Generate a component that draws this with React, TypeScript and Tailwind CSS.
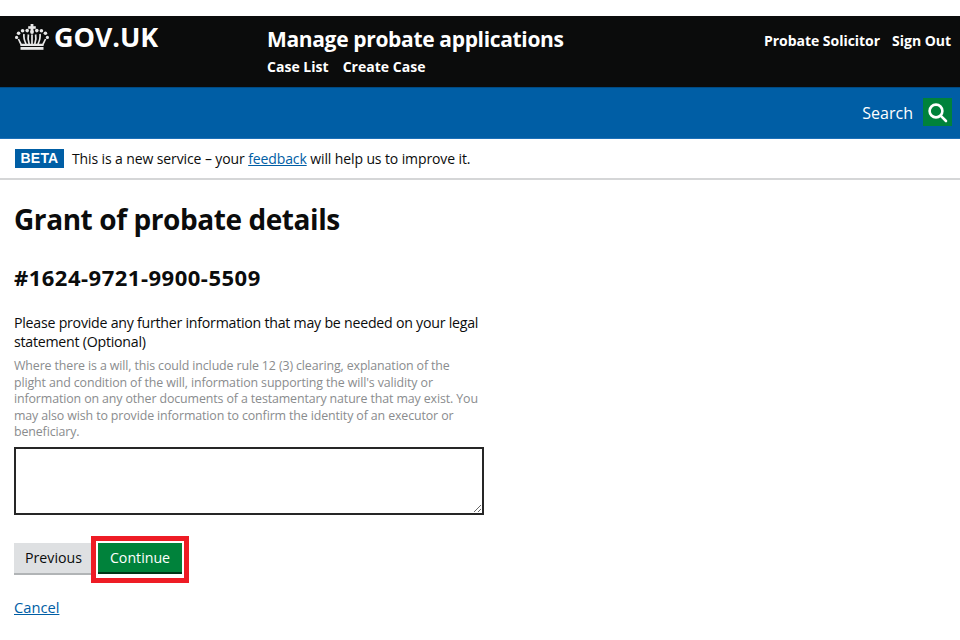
import React from "react";

const font = { fontFamily: '"Open Sans","Liberation Sans",sans-serif' };

function Crown() {
  return (
    <svg width="34" height="26" viewBox="0 0 34 26" className="shrink-0" fill="none">
      <g fill="#e8e8e8">
        <rect x="15.6" y="0" width="2.8" height="8" />
        <rect x="13.2" y="2.2" width="7.6" height="2.6" />
        <circle cx="17" cy="8" r="1.9" />
        <circle cx="12.2" cy="6.6" r="1.8" />
        <circle cx="21.8" cy="6.6" r="1.8" />
        <circle cx="7.6" cy="6.8" r="1.8" />
        <circle cx="26.4" cy="6.8" r="1.8" />
        <circle cx="3.6" cy="9.2" r="1.8" />
        <circle cx="30.4" cy="9.2" r="1.8" />
        <circle cx="1.6" cy="13.4" r="1.6" />
        <circle cx="32.4" cy="13.4" r="1.6" />
        <rect x="5.5" y="20.4" width="23" height="1.6" />
        <rect x="5.5" y="23" width="23" height="2.8" />
      </g>
      <path
        d="M3.4 15C4.6 17.5 5.6 19.2 6.2 20.6H27.8C28.4 19.2 29.4 17.5 30.6 15M9 10C8.4 13.5 9.6 17 11 20M25 10C25.6 13.5 24.4 17 23 20M17 10.5V20M13.4 10.5C12.6 14 13.2 17 14.2 20M20.6 10.5C21.4 14 20.8 17 19.8 20"
        stroke="#e8e8e8"
        strokeWidth="1.7"
      />
    </svg>
  );
}

export default function App() {
  return (
    <div className="min-h-[640px] bg-white pt-4 text-[#0b0c0c]" style={font}>
      <header className="flex h-[71px] bg-[#0b0c0c] pl-[15px] pr-[9px] text-white">
        <div className="flex w-[252px] shrink-0 items-start pt-[7px]">
          <div className="flex items-center gap-[5px]">
            <Crown />
            <span className="text-[27px] leading-[28px] font-bold tracking-[-0.1px]">GOV.UK</span>
          </div>
        </div>
        <div className="flex-1 pt-[9px]">
          <div className="text-[21px] leading-[28px] font-bold tracking-[-0.34px]">Manage probate applications</div>
          <nav className="mt-[4px] flex gap-[14px] text-[14px] leading-[20px] font-bold tracking-[0.02px]">
            <span>Case List</span>
            <span>Create Case</span>
          </nav>
        </div>
        <div className="flex gap-3 pt-[15px] text-[14px] leading-[20px] font-bold tracking-[-0.03px]">
          <span>Probate Solicitor</span>
          <span>Sign Out</span>
        </div>
      </header>

      <div className="flex h-[52px] items-center justify-end gap-[10px] border-t border-b border-t-[#004b84] border-b-[#1d70b8] bg-[#005ea5] pr-2 text-white">
        <span className="text-[16px]">Search</span>
        <div className="-mt-[2px] flex h-[28px] w-[29px] items-center justify-center bg-[#00823b]">
          <svg width="22" height="22" viewBox="0 0 22 22" fill="none" stroke="white" strokeWidth="2.6" className="-translate-x-px">
            <circle cx="10" cy="10" r="6.4" />
            <path d="M14.6 14.6L20 20" strokeLinecap="round" />
          </svg>
        </div>
      </div>

      <div className="flex h-[41px] items-center border-b-2 border-b-[#d5d6d7] pl-[15px]">
        <span className="flex h-[19px] w-[49px] items-center justify-center bg-[#005ea5] text-[14px] font-bold tracking-[0.2px] text-white" style={{ fontFamily: '"Liberation Sans",sans-serif' }}>
          BETA
        </span>
        <p className="ml-2 text-[14px] tracking-[-0.11px]">
          This is a new service – your <a className="text-[#005ea5] underline">feedback</a> will help us to improve it.
        </p>
      </div>

      <main className="pl-[14px]">
        <h1 className="mt-[21px] text-[28px] leading-[36px] font-bold tracking-[-0.42px]">Grant of probate details</h1>
        <h2 className="mt-[26px] text-[22px] leading-[28px] font-bold tracking-[0.5px]">#1624-9721-9900-5509</h2>
        <div className="w-[470px]">
          <label className="mt-[22px] block text-[14.2px] leading-[19px] tracking-[-0.25px]">
            Please provide any further information that may be needed on your legal statement (Optional)
          </label>
          <p className="mt-[7px] text-[12.4px] leading-[16.5px] tracking-[-0.12px] text-[#8a8c8e]">
            Where there is a will, this could include rule 12 (3) clearing, explanation of the plight and condition of the will, information supporting the will's validity or information on any other documents of a testamentary nature that may exist. You may also wish to provide information to confirm the identity of an executor or beneficiary.
          </p>
          <textarea className="mt-[6.5px] block h-[68px] w-[470px] border-2 border-[#262626] bg-white" />
        </div>
        <div className="mt-[21px] flex items-start">
          <button className="mt-[7px] h-[30px] w-[77px] bg-[#dee0e2] pl-[2px] text-[14.2px] shadow-[0_2px_0_#b1b4b6]">Previous</button>
          <div className="border-[5px] border-[#ee1c25] bg-white px-[2px] pt-[2px] pb-[6px]">
            <button className="block h-[29px] w-[84px] bg-[#00823b] text-[14.2px] text-white shadow-[0_2px_0_#003618]">Continue</button>
          </div>
        </div>
        <a className="mt-[14px] block text-[14.7px] leading-[20px] text-[#005ea5] underline">Cancel</a>
      </main>
    </div>
  );
}
